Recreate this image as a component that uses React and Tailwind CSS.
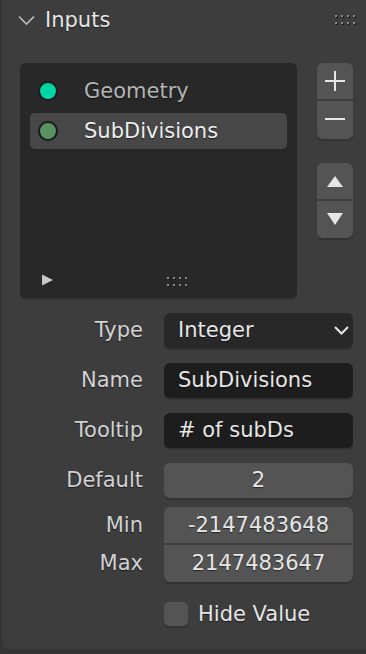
import React from "react";

const F = { fontFamily: '"DejaVu Sans", "Liberation Sans", sans-serif' };
const ts = "[text-shadow:0_1px_1px_rgba(0,0,0,0.55)]";

function Grip({ className = "" }) {
  const dots = [];
  for (let r = 0; r < 2; r++)
    for (let c = 0; c < 4; c++)
      dots.push(
        <rect key={`${r}${c}`} x={c * 6} y={r * 7} width="2" height="2" fill="#8a8a8a" />
      );
  const sh = [];
  for (let r = 0; r < 2; r++)
    for (let c = 0; c < 4; c++)
      sh.push(
        <rect key={`s${r}${c}`} x={c * 6 + 1} y={r * 7 + 1} width="2" height="2" fill="#1a1a1a" />
      );
  return (
    <svg width="22" height="10" viewBox="0 0 22 10" className={className}>
      {sh}
      {dots}
    </svg>
  );
}

function Label({ children }) {
  return (
    <div className={`w-[143px] text-right text-[21px] leading-none text-[#d2d2d2] ${ts}`}>
      {children}
    </div>
  );
}

export default function App() {
  return (
    <div style={F} className="w-[366px] h-[654px] bg-[#353535] overflow-hidden">
      <div className="h-[649px] bg-[#3d3d3d] rounded-bl-[6px] shadow-[inset_2px_0_0_#333333] flex flex-col">
        {/* Header */}
        <div className="h-[40px] flex items-center pl-[18px] pr-[9px]">
          <svg width="17" height="11" viewBox="0 0 17 11">
            <path d="M1 1.5 L8.5 9 L16 1.5" fill="none" stroke="#bdbdbd" strokeWidth="1.6" />
          </svg>
          <span className={`ml-[10px] text-[21px] leading-none text-[#e6e6e6] ${ts}`}>Inputs</span>
          <div className="flex-1" />
          <Grip />
        </div>

        {/* List + buttons */}
        <div className="flex mt-[23px] pl-[20px]">
          <div className="w-[277px] h-[235px] bg-[#282828] rounded-[6px] shadow-[0_2px_0_#333333] flex flex-col px-[10px] pt-[10px] pb-[12px]">
            <div className="h-[36px] flex items-center rounded-[5px]">
              <div className="ml-[8px] w-[20px] h-[20px] rounded-full bg-[#00d6a3] border-2 border-[#1b1b1b]" />
              <span className={`ml-[26px] text-[21px] leading-none text-[#b4b4b4] ${ts}`}>Geometry</span>
            </div>
            <div className="h-[36px] mt-[4px] flex items-center rounded-[5px] bg-[#474747]">
              <div className="ml-[8px] w-[20px] h-[20px] rounded-full bg-[#5a9264] border-2 border-[#1b1b1b]" />
              <span className={`ml-[26px] text-[21px] leading-none text-[#eeeeee] ${ts}`}>SubDivisions</span>
            </div>
            <div className="flex-1" />
            <div className="flex items-center h-[12px]">
              <svg width="12" height="12" viewBox="0 0 12 12" className="ml-[12px]">
                <path d="M0 0.5 L11 6 L0 11.5 Z" fill="#c8c8c8" />
              </svg>
              <Grip className="ml-[113px] mt-[4px]" />
            </div>
          </div>

          <div className="ml-[20px] w-[36px] flex flex-col">
            <div className="flex flex-col shadow-[0_2px_0_#333333] rounded-[6px]">
              <div className="h-[36px] bg-[#545454] rounded-t-[6px] flex items-center justify-center">
                <svg width="20" height="20" viewBox="0 0 20 20">
                  <path d="M10 0 V20 M0 10 H20" stroke="#e6e6e6" strokeWidth="2" />
                </svg>
              </div>
              <div className="h-[38px] mt-[2px] bg-[#545454] rounded-b-[6px] flex items-center justify-center">
                <svg width="20" height="4" viewBox="0 0 20 4" className="mb-[3px]">
                  <path d="M0 2 H20" stroke="#e6e6e6" strokeWidth="2" />
                </svg>
              </div>
            </div>
            <div className="flex flex-col mt-[24px] shadow-[0_2px_0_#333333] rounded-[6px]">
              <div className="h-[36px] bg-[#545454] rounded-t-[6px] flex items-center justify-center">
                <svg width="16" height="11" viewBox="0 0 16 11" className="mt-[1px]">
                  <path d="M8 0 L16 11 L0 11 Z" fill="#e6e6e6" />
                </svg>
              </div>
              <div className="h-[37px] mt-[2px] bg-[#545454] rounded-b-[6px] flex items-center justify-center">
                <svg width="16" height="12" viewBox="0 0 16 12" className="mb-[1px]">
                  <path d="M0 0 L16 0 L8 12 Z" fill="#e6e6e6" />
                </svg>
              </div>
            </div>
          </div>
        </div>

        {/* Form */}
        <div className="flex flex-col mt-[15px]">
          <div className="flex items-center h-[35px]">
            <Label>Type</Label>
            <div className="ml-[21px] w-[189px] h-[35px] bg-[#282828] rounded-[6px] shadow-[0_2px_0_#333333] flex items-center pl-[14px] pr-[4px]">
              <span className={`text-[21px] leading-none text-[#e6e6e6] ${ts}`}>Integer</span>
              <div className="flex-1" />
              <svg width="15" height="9" viewBox="0 0 15 9">
                <path d="M1 1 L7.5 7.5 L14 1" fill="none" stroke="#e6e6e6" strokeWidth="2" />
              </svg>
            </div>
          </div>

          <div className="flex items-center h-[35px] mt-[15px]">
            <Label>Name</Label>
            <div className="ml-[21px] w-[189px] h-[35px] bg-[#1d1d1d] rounded-[6px] shadow-[0_2px_0_#333333] flex items-center pl-[14px]">
              <span className={`text-[21px] leading-none text-[#e6e6e6] ${ts}`}>SubDivisions</span>
            </div>
          </div>

          <div className="flex items-center h-[35px] mt-[15px]">
            <Label>Tooltip</Label>
            <div className="ml-[21px] w-[189px] h-[35px] bg-[#1d1d1d] rounded-[6px] shadow-[0_2px_0_#333333] flex items-center pl-[14px]">
              <span className={`text-[21px] leading-none text-[#e6e6e6] ${ts}`}># of subDs</span>
            </div>
          </div>

          <div className="flex items-center h-[35px] mt-[15px]">
            <Label>Default</Label>
            <div className="ml-[21px] w-[189px] h-[35px] bg-[#545454] rounded-[6px] shadow-[0_2px_0_#333333] flex items-center justify-center">
              <span className={`text-[21px] leading-none text-[#e6e6e6] ${ts}`}>2</span>
            </div>
          </div>

          <div className="flex items-center h-[36px] mt-[9px]">
            <Label>Min</Label>
            <div className="ml-[21px] w-[189px] h-[36px] bg-[#545454] rounded-t-[6px] flex items-center justify-center">
              <span className={`text-[21px] leading-none text-[#e6e6e6] ${ts}`}>-2147483648</span>
            </div>
          </div>
          <div className="flex items-center h-[37px] mt-[2px]">
            <Label>Max</Label>
            <div className="ml-[21px] w-[189px] h-[37px] bg-[#545454] rounded-b-[6px] shadow-[0_2px_0_#333333] flex items-center justify-center">
              <span className={`text-[21px] leading-none text-[#e6e6e6] ${ts}`}>2147483647</span>
            </div>
          </div>

          <div className="flex items-center h-[24px] mt-[20px] pl-[164px]">
            <div className="w-[24px] h-[24px] bg-[#545454] rounded-[5px] shadow-[0_2px_0_#333333]" />
            <span className={`ml-[10px] text-[21px] leading-none text-[#e6e6e6] ${ts}`}>Hide Value</span>
          </div>
        </div>
      </div>
    </div>
  );
}
